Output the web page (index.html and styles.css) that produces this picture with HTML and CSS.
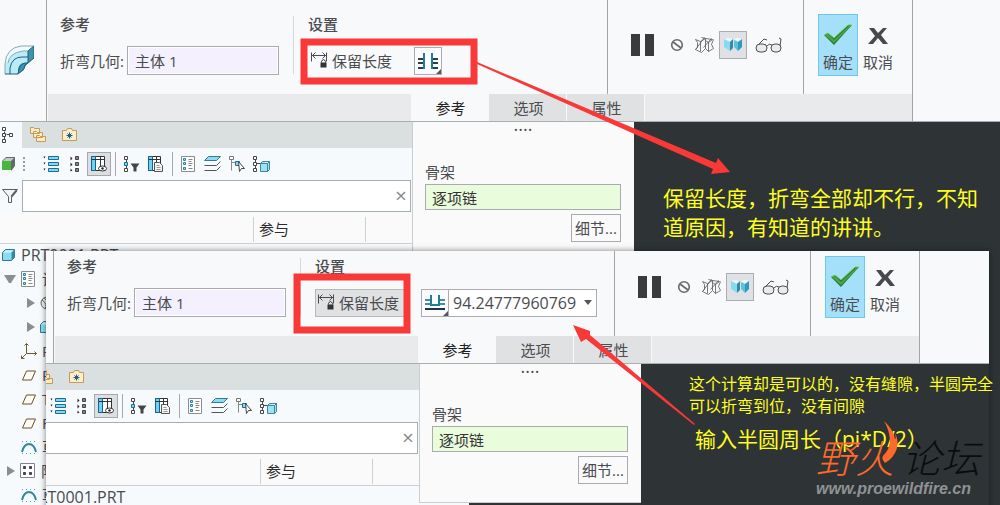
FILE: index.html
```
<!DOCTYPE html>
<html lang="zh-CN">
  <head>
    <meta charset="utf-8" />
    <title>折弯 - 保留长度</title>
    <link rel="stylesheet" href="styles.css">
  </head>
  <body>
    <svg class="sprite" aria-hidden="true">
      <symbol id="i-bend" viewBox="0 0 30 30">
        <path d="M1 29V19Q2 3 17 1H30L24 6V18H19L14 23V29Z" fill="#b9ecf7" />
        <path d="M1 19Q2 3 17 1H30L24 6H19Q8 7 4 16Z" fill="#eefbfe" />
        <path d="M24 6L30 1V13L24 18ZM14 29V24Q15 19 19 18H24L20 23V25L14 29Z" fill="#3f93b0" />
        <path d="M1 29V19Q2 3 17 1H30L24 6H19Q5 8 4 18" fill="none" stroke="#8aa9b4" />
        <path d="M1 29H14L20 24Q20 19 24 18L30 13V1L24 6V18H21Q15 19 14 29M6 29V23Q8 12 18 12H24" fill="none" stroke="#1f5f7a" />
      </symbol>
      <symbol id="i-keep" viewBox="-0.5 -0.5 17 17">
        <path d="M0 0V9M15 0V9M0 3H15M4 0L1 3L4 6M11 0L14 3L11 6" fill="none" stroke="#4a4c4e" />
        <path d="M10 10V9Q12 5 14 9V10" fill="none" stroke="#333" />
        <path d="M9 10H15V15H9Z" fill="#333" />
      </symbol>
      <symbol id="i-slit" viewBox="0 0 22 18">
        <path d="M1 7H6M1 11H6M1 16H6M16 7H21M16 11H21M16 16H21" stroke="#333c44" stroke-width="2" />
        <path d="M7 1V17M15 1V17" stroke="#1c7d9c" stroke-width="2" />
      </symbol>
      <symbol id="i-fold" viewBox="0 0 22 18">
        <path d="M1 6H6M1 10H6M16 6H21M16 10H21" stroke="#4b8ba0" stroke-width="2" />
        <path d="M1 15H21" stroke="#20334a" stroke-width="2" />
        <path d="M7 1V11H15V1" fill="none" stroke="#1c7d9c" stroke-width="2" />
      </symbol>
      <symbol id="i-pause" viewBox="0 0 23 22">
        <path d="M0 0H9V22H0ZM14 0H23V22H14Z" fill="#3b3b3d" />
      </symbol>
      <symbol id="i-none" viewBox="0 0 14 14">
        <circle cx="7" cy="7" r="5.3" fill="none" stroke="#66696c" stroke-width="1.6" />
        <path d="M3 4L11 10" stroke="#66696c" stroke-width="1.6" />
      </symbol>
      <symbol id="i-wire" viewBox="-0.5 -0.5 20 18">
        <path d="M0 3L5 5L10 2M0 3L2 6V11L0 13L6 16L10 12V2L6 1M5 5V15M10 2L17 3L13 6L10 4M13 6V15L18 12L16 8L18 3M10 12L13 15M0 13L9 1M8 11L16 2" fill="none" stroke="#55585b" stroke-width="0.8" />
      </symbol>
      <symbol id="i-solid" viewBox="0 0 18 14">
        <path d="M0 1L5 0L9 1L6 4Z" fill="#e9fbff" />
        <path d="M0 1L6 4V13L0 9Z" fill="#86dbf0" />
        <path d="M6 4L9 1V10L6 13Z" fill="#3489a5" />
        <path d="M10 1L14 0L18 1L15 4Z" fill="#effcff" />
        <path d="M10 2L14 4V13L10 9Z" fill="#5cc3df" />
        <path d="M14 4L18 1V9L14 13Z" fill="#2e9ac0" />
      </symbol>
      <symbol id="i-glasses" viewBox="0 0 28 16">
        <path d="M2 9L9 2L12 3M12 9Q14 6 17 8M25 9L26 2L24 1" fill="none" stroke="#4a4d50" />
        <rect x="1" y="7" width="11" height="8" rx="4" fill="#e9ecee" stroke="#4a4d50" />
        <rect x="16" y="7" width="10" height="8" rx="4" fill="#e9ecee" stroke="#4a4d50" />
      </symbol>
      <symbol id="i-ok" viewBox="0 0 28 22">
        <path d="M0 11L4 9L10 14L24 1H28L10 21Z" fill="#2c7b35" />
        <path d="M1 11L4 10L10 16L25 2H27L10 19Z" fill="#46a64a" />
        <path d="M0 11L4 9L10 14L24 1H28" fill="none" stroke="#7ccb5c" />
      </symbol>
      <symbol id="i-cancel" viewBox="0 0 20 16">
        <path d="M1 0H6L10 5L15 0H19L13 7L20 16H15L10 10L5 16H0L7 8Z" fill="#47494c" />
      </symbol>
      <symbol id="i-tree" viewBox="-0.5 -0.5 12 16">
        <path d="M2 4V12M4 7H8" stroke="#444" />
        <path d="M0 0H3V3H0ZM0 6H3V9H0ZM0 12H3V15H0ZM7 6H10V9H7Z" fill="#fff" stroke="#444" />
      </symbol>
      <symbol id="i-folders" viewBox="-0.5 -0.5 16 16">
        <path d="M0 0H3L4 1H9V6H0ZM3 4H6L7 5H12V10H3ZM6 8H9L10 9H15V14H6Z" fill="#fdebc4" stroke="#c39a57" />
      </symbol>
      <symbol id="i-star" viewBox="-0.5 -0.5 16 14">
        <path d="M0 2H4L5 0H9L10 2H14V12H0Z" fill="#fdeecb" stroke="#c39a57" />
        <path d="M7 4V10M4 7H10M5 5L9 9M9 5L5 9" stroke="#1d5f82" />
      </symbol>
      <symbol id="i-cube" viewBox="0 0 13 14">
        <path d="M0 4L4 0H13V9L9 14V4Z" fill="#66696c" />
        <path d="M1 4L4 1H12L9 4Z" fill="#c6c9c9" />
        <path d="M0 4H9V13H0Z" fill="#46b93a" />
      </symbol>
      <symbol id="i-part" viewBox="-0.5 -0.5 14 13">
        <path d="M0 3L3 0H12V8L9 11H0Z" fill="#8bdcf3" stroke="#2b7795" />
        <path d="M1 3L3 1H11L9 3Z" fill="#d5f5fc" />
        <path d="M9 3L12 0V8L9 11Z" fill="#3589a8" />
      </symbol>
      <symbol id="i-list" viewBox="-0.5 -0.5 16 16">
        <path d="M0 0H2L1 2ZM0 6H2L1 8ZM0 12H2L1 14Z" fill="#222" />
        <path d="M5 0H15V3H5ZM5 6H15V9H5ZM5 12H15V15H5Z" fill="#7ed9f5" stroke="#1d6b94" />
      </symbol>
      <symbol id="i-compact" viewBox="-0.5 -0.5 16 16">
        <path d="M3 0L5 2L3 4ZM3 6L5 8L3 10ZM3 12L5 14L3 15Z" fill="#222" />
        <path d="M8 0H11V3H8ZM8 6H11V9H8ZM8 12H11V15H8Z" fill="#888" stroke="#444" />
      </symbol>
      <symbol id="i-columns" viewBox="-0.5 -0.5 16 16">
        <path d="M0 0H13V14H0Z" fill="#fff" stroke="#333" />
        <path d="M0 0H4V14H0Z" fill="#6dd2f4" stroke="#1a6189" />
        <path d="M0 3H13M9 0V14" stroke="#333" />
        <ellipse cx="11" cy="12" rx="4" ry="2.5" fill="#fff" stroke="#333" />
        <circle cx="11" cy="12" r="1.2" fill="#222" />
      </symbol>
      <symbol id="i-treefilter" viewBox="-0.5 -0.5 16 16">
        <path d="M2 3V13" stroke="#444" />
        <path d="M0 0H3V3H0ZM0 12H3V15H0Z" fill="#fff" stroke="#444" />
        <path d="M0 6H3V9H0Z" fill="#7ed9f5" stroke="#1d6b94" />
        <path d="M6 7H15L12 11V15H9V11Z" fill="#444" />
      </symbol>
      <symbol id="i-paste" viewBox="-0.5 -0.5 16 16">
        <path d="M0 0H12V14H0Z" fill="#fff" stroke="#333" />
        <path d="M0 0H4V14H0Z" fill="#6dd2f4" stroke="#1a6189" />
        <path d="M0 3H12M8 0V7" stroke="#333" />
        <path d="M6 6H11L14 9V15H6Z" fill="#f6f6f6" stroke="#555" />
        <path d="M8 9H11M8 11H12M8 13H12" stroke="#999" />
      </symbol>
      <symbol id="i-detail" viewBox="-0.5 -0.5 16 16">
        <path d="M0 0H13V15H0Z" fill="#fff" stroke="#8a8d90" />
        <path d="M2 2H4V4H2ZM2 6H4V8H2ZM2 11H4V13H2Z" fill="#9fdff2" stroke="#2c83a6" />
        <path d="M7 3H11M7 5H10M7 7H11M7 9H10M7 12H11" stroke="#888" />
      </symbol>
      <symbol id="i-layers" viewBox="-0.5 -0.5 18 16">
        <path d="M4 0H16L12 4H0Z" fill="#8adcf2" stroke="#39778f" />
        <path d="M0 9H12L16 5M0 14H12L16 10" fill="none" stroke="#555" />
      </symbol>
      <symbol id="i-pick" viewBox="-0.5 -0.5 16 16">
        <path d="M2 3V14M2 6H6" stroke="#888" />
        <path d="M0 0H4V3H0Z" fill="#fff" stroke="#777" />
        <path d="M6 5H10V9H6Z" fill="#8adcf2" stroke="#1d6b94" />
        <path d="M9 5L15 12H12L10 15Z" fill="#fff" stroke="#444" />
      </symbol>
      <symbol id="i-treecube" viewBox="-0.5 -0.5 17 16">
        <path d="M2 3V13M3 7H7" stroke="#444" />
        <path d="M0 0H3V3H0ZM0 6H3V9H0ZM0 12H3V15H0Z" fill="#fff" stroke="#444" />
        <path d="M7 7L9 5H16V13L14 15H7ZM14 7V15M7 7H14L16 5" fill="#9fe2f5" stroke="#3a87a3" />
      </symbol>
      <symbol id="i-funnel" viewBox="-0.5 -0.5 17 15">
        <path d="M0 0H15L9 7V13H6V7Z" fill="#f2f3f4" stroke="#5b5e61" />
        <path d="M9 7L14 1" stroke="#5b5e61" stroke-width="2" />
      </symbol>
      <symbol id="i-csys" viewBox="-0.5 -0.5 16 16">
        <path d="M5 0V10H15M5 10L0 15M3 2L5 0L7 2M13 8L15 10L13 12M0 12V15H3" fill="none" stroke="#6b5a36" />
      </symbol>
      <symbol id="i-plane" viewBox="0 0 15 11">
        <path d="M5 1H14L10 10H1Z" fill="#fffdf6" stroke="#6b4f2a" />
      </symbol>
      <symbol id="i-sketch" viewBox="0 0 16 13">
        <path d="M1 11Q3 3 8 3T15 11" fill="none" stroke="#2f83a5" stroke-width="2" />
        <path d="M1 0.5H16M1 12.5H16" stroke="#3fa5cf" stroke-dasharray="1 3" />
      </symbol>
      <symbol id="i-pattern" viewBox="-0.5 -0.5 16 16">
        <path d="M0 0H14V14H0Z" fill="#fff" stroke="#85809a" />
        <path d="M3 3H5V5H3ZM9 3H11V5H9ZM3 9H5V11H3ZM9 9H11V11H9Z" fill="#453f58" stroke="#453f58" />
      </symbol>
      <symbol id="i-ball" viewBox="0 0 14 14">
        <circle cx="7" cy="7" r="6" fill="#eee" stroke="#666" />
        <path d="M2 4Q8 8 5 13M4 2Q10 6 9 13" fill="none" stroke="#666" />
      </symbol>
    </svg>

    <main class="desktop">
      <!-- window with the split-style bend -->
      <section class="window">
        <header class="ribbon">
          <div class="logo"><svg width="30" height="30"><use href="#i-bend" /></svg></div>
          <div class="panel">
            <div class="groups">
              <div class="group refs">
                <h2>参考</h2>
                <div class="line">
                  <label for="geom-a">折弯几何:</label>
                  <input class="geom" id="geom-a" type="text" value="主体 1" />
                </div>
              </div>
              <div class="group settings">
                <h2>设置</h2>
                <div class="line">
                  <button class="keep" type="button"><svg width="17" height="17"><use href="#i-keep" /></svg>保留长度</button>
                  <button class="mode" type="button" aria-label="折弯类型"><svg width="22" height="18"><use href="#i-slit" /></svg></button>
                </div>
              </div>
              <div class="group preview">
                <button class="pause" type="button" aria-label="暂停"><svg width="23" height="22"><use href="#i-pause" /></svg></button>
                <button class="tool" type="button" aria-label="无预览"><svg width="14" height="14"><use href="#i-none" /></svg></button>
                <button class="tool" type="button" aria-label="分离"><svg width="20" height="18"><use href="#i-wire" /></svg></button>
                <button class="tool pressed" type="button" aria-label="连接"><svg width="18" height="14"><use href="#i-solid" /></svg></button>
                <button class="tool glasses" type="button" aria-label="特征预览"><svg width="28" height="16"><use href="#i-glasses" /></svg></button>
              </div>
              <div class="group finish">
                <button class="ok" type="button"><svg width="28" height="22"><use href="#i-ok" /></svg>确定</button>
                <button class="cancel" type="button"><svg width="20" height="16"><use href="#i-cancel" /></svg>取消</button>
              </div>
            </div>
            <nav class="tabs">
              <button class="active" type="button">参考</button>
              <button type="button">选项</button>
              <button type="button">属性</button>
            </nav>
          </div>
        </header>

        <div class="workarea">
          <aside class="navigator">
            <div class="nav-tabs">
              <button class="active" type="button" aria-label="模型树"><svg width="12" height="16"><use href="#i-tree" /></svg></button>
              <button type="button" aria-label="文件夹"><svg width="16" height="16"><use href="#i-folders" /></svg></button>
              <button type="button" aria-label="收藏夹"><svg width="16" height="14"><use href="#i-star" /></svg></button>
            </div>
            <div class="toolbar">
              <span class="cube"><svg width="13" height="14"><use href="#i-cube" /></svg></span>
              <button type="button" aria-label="展开"><svg width="16" height="16"><use href="#i-list" /></svg></button>
              <button type="button" aria-label="折叠"><svg width="16" height="16"><use href="#i-compact" /></svg></button>
              <button class="pressed" type="button" aria-label="显示列"><svg width="16" height="16"><use href="#i-columns" /></svg></button>
              <i></i>
              <button type="button" aria-label="树过滤器"><svg width="16" height="16"><use href="#i-treefilter" /></svg></button>
              <button type="button" aria-label="树列"><svg width="16" height="16"><use href="#i-paste" /></svg></button>
              <i></i>
              <button type="button" aria-label="详细信息"><svg width="16" height="16"><use href="#i-detail" /></svg></button>
              <button type="button" aria-label="层树"><svg width="18" height="16"><use href="#i-layers" /></svg></button>
              <button type="button" aria-label="选择"><svg width="16" height="16"><use href="#i-pick" /></svg></button>
              <button type="button" aria-label="主体"><svg width="17" height="16"><use href="#i-treecube" /></svg></button>
            </div>
            <div class="search">
              <svg width="17" height="15"><use href="#i-funnel" /></svg>
              <input type="text" aria-label="过滤" />
              <button type="button" aria-label="清除">×</button>
            </div>
            <table class="tree">
              <thead>
                <tr><th class="name"></th><th class="part"><span>参与</span></th><th><span></span></th></tr>
              </thead>
              <tbody>
                <tr><td colspan="3"><div class="node root"><svg width="14" height="13"><use href="#i-part" /></svg>PRT0001.PRT</div></td></tr>
                <tr><td colspan="3"><div class="node"><b class="open"></b><svg width="16" height="16"><use href="#i-detail" /></svg>设计项</div></td></tr>
                <tr><td colspan="3"><div class="node child"><b></b><svg width="14" height="14"><use href="#i-ball" /></svg>材料</div></td></tr>
                <tr><td colspan="3"><div class="node child"><b></b><svg width="14" height="13"><use href="#i-part" /></svg>主体 1</div></td></tr>
                <tr><td colspan="3"><div class="node leaf"><svg width="16" height="16"><use href="#i-csys" /></svg>PRT_CSYS_DEF</div></td></tr>
                <tr><td colspan="3"><div class="node leaf"><svg width="16" height="11"><use href="#i-plane" /></svg>RIGHT</div></td></tr>
                <tr><td colspan="3"><div class="node leaf"><svg width="16" height="11"><use href="#i-plane" /></svg>TOP</div></td></tr>
                <tr><td colspan="3"><div class="node leaf"><svg width="16" height="11"><use href="#i-plane" /></svg>FRONT</div></td></tr>
                <tr><td colspan="3"><div class="node leaf"><svg width="16" height="13"><use href="#i-sketch" /></svg>草绘 1</div></td></tr>
                <tr><td colspan="3"><div class="node"><b></b><svg width="16" height="16"><use href="#i-pattern" /></svg>阵列 1</div></td></tr>
                <tr><td colspan="3"><div class="node leaf"><svg width="16" height="13"><use href="#i-sketch" /></svg>草绘 2</div></td></tr>
              </tbody>
            </table>
          </aside>
          <div class="flyout">
            <span class="grip">····</span>
            <label for="chain-a">骨架</label>
            <input id="chain-a" type="text" value="逐项链" />
            <button type="button">细节...</button>
          </div>
        </div>
      </section>

      <!-- window with the fixed length, lies over the first one -->
      <section class="window front">
        <header class="ribbon">
          <div class="panel">
            <div class="groups">
              <div class="group refs">
                <h2>参考</h2>
                <div class="line">
                  <label for="geom-b">折弯几何:</label>
                  <input class="geom" id="geom-b" type="text" value="主体 1" />
                </div>
              </div>
              <div class="group settings">
                <h2>设置</h2>
                <div class="line">
                  <button class="keep pressed" type="button"><svg width="17" height="17"><use href="#i-keep" /></svg>保留长度</button>
                  <button class="mode" type="button" aria-label="折弯类型"><svg width="22" height="18"><use href="#i-fold" /></svg></button>
                  <div class="combo">
                    <input type="text" aria-label="长度" value="94.24777960769" />
                    <button type="button" aria-label="最近的值"></button>
                  </div>
                </div>
              </div>
              <div class="group preview">
                <button class="pause" type="button" aria-label="暂停"><svg width="23" height="22"><use href="#i-pause" /></svg></button>
                <button class="tool" type="button" aria-label="无预览"><svg width="14" height="14"><use href="#i-none" /></svg></button>
                <button class="tool" type="button" aria-label="分离"><svg width="20" height="18"><use href="#i-wire" /></svg></button>
                <button class="tool pressed" type="button" aria-label="连接"><svg width="18" height="14"><use href="#i-solid" /></svg></button>
                <button class="tool glasses" type="button" aria-label="特征预览"><svg width="28" height="16"><use href="#i-glasses" /></svg></button>
              </div>
              <div class="group finish">
                <button class="ok" type="button"><svg width="28" height="22"><use href="#i-ok" /></svg>确定</button>
                <button class="cancel" type="button"><svg width="20" height="16"><use href="#i-cancel" /></svg>取消</button>
              </div>
            </div>
            <nav class="tabs">
              <button class="active" type="button">参考</button>
              <button type="button">选项</button>
              <button type="button">属性</button>
            </nav>
          </div>
        </header>

        <div class="workarea">
          <aside class="navigator">
            <div class="nav-tabs">
              <button class="active" type="button" aria-label="模型树"><svg width="12" height="16"><use href="#i-tree" /></svg></button>
              <button type="button" aria-label="文件夹"><svg width="16" height="16"><use href="#i-folders" /></svg></button>
              <button type="button" aria-label="收藏夹"><svg width="16" height="14"><use href="#i-star" /></svg></button>
            </div>
            <div class="toolbar">
              <span class="cube"><svg width="13" height="14"><use href="#i-cube" /></svg></span>
              <button type="button" aria-label="展开"><svg width="16" height="16"><use href="#i-list" /></svg></button>
              <button type="button" aria-label="折叠"><svg width="16" height="16"><use href="#i-compact" /></svg></button>
              <button class="pressed" type="button" aria-label="显示列"><svg width="16" height="16"><use href="#i-columns" /></svg></button>
              <i></i>
              <button type="button" aria-label="树过滤器"><svg width="16" height="16"><use href="#i-treefilter" /></svg></button>
              <button type="button" aria-label="树列"><svg width="16" height="16"><use href="#i-paste" /></svg></button>
              <i></i>
              <button type="button" aria-label="详细信息"><svg width="16" height="16"><use href="#i-detail" /></svg></button>
              <button type="button" aria-label="层树"><svg width="18" height="16"><use href="#i-layers" /></svg></button>
              <button type="button" aria-label="选择"><svg width="16" height="16"><use href="#i-pick" /></svg></button>
              <button type="button" aria-label="主体"><svg width="17" height="16"><use href="#i-treecube" /></svg></button>
            </div>
            <div class="search">
              <svg width="17" height="15"><use href="#i-funnel" /></svg>
              <input type="text" aria-label="过滤" />
              <button type="button" aria-label="清除">×</button>
            </div>
            <table class="tree">
              <thead>
                <tr><th class="name"></th><th class="part"><span>参与</span></th><th><span></span></th></tr>
              </thead>
              <tbody>
                <tr><td colspan="3"><div class="node root"><svg width="14" height="13"><use href="#i-part" /></svg>PRT0001.PRT</div></td></tr>
              </tbody>
            </table>
          </aside>
          <div class="flyout">
            <span class="grip">····</span>
            <label for="chain-b">骨架</label>
            <input id="chain-b" type="text" value="逐项链" />
            <button type="button">细节...</button>
          </div>
        </div>
      </section>

      <!-- red boxes and arrows -->
      <svg class="marks" width="1000" height="505" viewBox="0 0 1000 505" aria-hidden="true">
        <rect x="304" y="42" width="170" height="39" />
        <rect x="297" y="277" width="110" height="53" />
        <path d="M477 62L716 163L718 158L730 172L711 174L713 169L477 64Z" />
        <path d="M694 425L586 339L581 342L573 325L590 331L590 335L695 424Z" />
      </svg>

      <p class="note note-top">保留长度，折弯全部却不行，不知道原因，有知道的讲讲。</p>
      <p class="note note-calc">这个计算却是可以的，没有缝隙，半圆完全可以折弯到位，没有间隙</p>
      <p class="note note-input">输入半圆周长（pi*D/2）</p>

      <div class="watermark">
        <div class="brand"><em>野火</em><span>论坛</span></div>
        <a href="#">www.proewildfire.cn</a>
        <svg class="flame" width="16" height="42" viewBox="0 0 16 42"><path d="M2 0Q11 8 13 18Q15 17 12 11Q17 18 15 27Q12 37 3 42Q-1 38 1 35Q8 28 8 19Q7 8 2 0Z" fill="#ff6a2b" /></svg>
      </div>
    </main>
  </body>
</html>
```
FILE: styles.css
```
* {
  box-sizing: border-box;
}
body {
  margin: 0;
  background-color: #2e3436;
  color: #4a4c4f;
  font: 15px/20px "Open Sans", "Noto Sans CJK SC", sans-serif;
}
button,
input {
  margin: 0;
  padding: 0;
  border: 0;
  border-radius: 0;
  background: none;
  color: inherit;
  font: inherit;
}
input {
  min-width: 0;
}
svg {
  display: block;
  flex: none;
}
.sprite {
  position: absolute;
  width: 0;
  height: 0;
}
.desktop {
  position: relative;
  height: 100vh;
  overflow: hidden;
}

/* windows */
.window {
  display: flex;
  flex-direction: column;
  min-height: 100%;
}
.window.front {
  position: absolute;
  top: 251px;
  left: 46px;
  right: 11px;
  min-height: 280px;
  overflow: hidden;
  background-color: #2e3436;
  box-shadow: 0 0 6px rgba(0, 0, 0, 0.5);
}

/* ribbon */
.ribbon {
  display: flex;
  background-color: #f8f9fb;
  border-bottom: 1px solid #a5b1b1;
}
.front .ribbon {
  padding-left: 7px;
}
.logo {
  width: 46px;
  padding: 45px 0 0 4px;
}
.panel {
  width: 867px;
  border: 1px solid #a2a4a6;
  border-width: 0 1px;
}
.groups {
  display: flex;
  height: 94px;
}
.front .groups {
  height: 85px;
}
.group {
  padding-top: 14px;
}
.front .group {
  padding-top: 5px;
}
.group h2 {
  margin: 0 0 12px;
  font-size: 15px;
  line-height: 20px;
  font-weight: 500;
}
.line {
  display: flex;
  align-items: center;
  height: 29px;
}
.refs {
  width: 246px;
  padding-left: 13px;
}
.refs label {
  width: 67px;
}
.geom {
  width: 152px;
  height: 29px;
  padding: 0 7px;
  border: 1px solid #a9abae;
  background-color: #f4f0fd;
  box-shadow: inset 0 0 0 1px #fff;
}
.settings {
  width: 314px;
  padding-left: 15px;
  background: linear-gradient(#d5d7d9, #d5d7d9) 0 16px / 1px 58px no-repeat;
}
.front .settings {
  background-position: 0 7px;
}
.keep {
  display: flex;
  align-items: center;
  gap: 4px;
  width: 92px;
  height: 28px;
  padding-left: 3px;
  white-space: nowrap;
}
.keep.pressed {
  padding-left: 2px;
  border: 1px solid #b6b8ba;
  background-color: #e0e1e3;
}
.mode {
  position: relative;
  display: flex;
  align-items: center;
  justify-content: center;
  width: 28px;
  height: 28px;
  margin-left: 14px;
  border: 1px solid #abadb2;
  background-color: #fafbfd;
}
.mode::after {
  content: "";
  position: absolute;
  right: 0;
  bottom: 0;
  border-left: 5px solid transparent;
  border-bottom: 5px solid #55575a;
}
.combo {
  display: flex;
  align-items: center;
  width: 148px;
  height: 28px;
  border: 1px solid #abadb2;
  border-left: 0;
  background-color: #fff;
}
.combo input {
  flex: 1;
  padding-left: 4px;
  font-size: 16px;
}
.combo button {
  width: 14px;
  height: 26px;
}
.combo button::after {
  content: "";
  display: block;
  width: 0;
  margin-left: 2px;
  border: 4px solid transparent;
  border-top: 5px solid #55575a;
  border-bottom: 0;
}
.preview {
  display: flex;
  align-items: flex-start;
  width: 196px;
  padding-left: 23px;
  border-left: 1px solid #a2a4a6;
}
.preview button {
  display: flex;
  align-items: center;
  justify-content: center;
  width: 28px;
  height: 28px;
  margin-top: 17px;
}
.preview .pause {
  width: 23px;
  margin-right: 9px;
}
.preview .glasses {
  margin-left: 8px;
}
.preview .pressed {
  border: 1px solid #aaacaf;
  background-color: #e0e1e4;
}
.finish {
  display: flex;
  align-items: flex-start;
  flex: 1;
  padding-left: 14px;
  border-left: 1px solid #a2a4a6;
}
.finish button {
  display: flex;
  flex-direction: column;
  align-items: center;
  justify-content: space-between;
  width: 40px;
  height: 62px;
  padding: 9px 0 3px;
  white-space: nowrap;
}
.finish .cancel {
  padding: 14px 0 4px;
}
.finish .ok {
  border: 1px solid #6fc8ec;
  background-color: #a5e0fb;
}
.tabs {
  display: flex;
  height: 27px;
  margin-left: 1px;
  padding-left: 363px;
  background-color: #e8eaeb;
}
.tabs button {
  width: 78px;
  padding-left: 2px;
  border-right: 1px solid #f8f9fb;
  background-color: #dfe1e2;
}
.tabs .active {
  background-color: #f8f9fb;
  color: #222;
}

/* model tree side */
.workarea {
  position: relative;
  display: flex;
  flex: 1;
}
.navigator {
  width: 462px;
  flex: none;
  background-color: #f7fafc;
}
.front .navigator {
  margin-left: -39px;
}
.nav-tabs {
  display: flex;
  height: 26px;
  background-color: #dadfdf;
}
.nav-tabs button {
  display: flex;
  align-items: center;
  justify-content: center;
  width: 32px;
}
.nav-tabs .active {
  width: 22px;
  padding-right: 6px;
  background-color: #f7fafc;
}
.toolbar {
  display: flex;
  align-items: center;
  height: 32px;
}
.toolbar .cube {
  width: 25px;
  margin-right: 14px;
  padding-left: 2px;
  border-right: 2px dotted #999;
}
.toolbar button {
  display: flex;
  align-items: center;
  justify-content: center;
  width: 24px;
  height: 24px;
}
.toolbar .pressed {
  border: 1px solid #a6a8ab;
  background-color: #dcdee1;
}
.toolbar i {
  width: 1px;
  height: 24px;
  margin: 0 4px;
  background-color: #a6a8ab;
}
.search {
  display: flex;
  align-items: center;
  width: 411px;
  height: 32px;
  padding-left: 2px;
}
.search input {
  flex: 1;
  height: 32px;
  margin: 0 -20px 0 3px;
  border: 1px solid #a3afb0;
  background-color: #fff;
}
.search button {
  width: 20px;
  color: #888;
  font-size: 20px;
}
.tree {
  width: 100%;
  table-layout: fixed;
  border-collapse: collapse;
}
.tree th {
  height: 31px;
  padding: 5px 0 0;
  border-bottom: 1px solid #ccd0d3;
  background-color: #fafafb;
  color: #2c2c2e;
  font-weight: 400;
  text-align: left;
}
.tree .name {
  width: 253px;
}
.tree .part {
  width: 112px;
}
.tree th span {
  display: block;
  height: 25px;
  padding-left: 5px;
  border-left: 1px solid #ccd0d3;
  line-height: 25px;
}
.tree td {
  height: 24px;
  padding: 0;
}
.node {
  display: flex;
  align-items: center;
  gap: 5px;
  padding-left: 4px;
  white-space: nowrap;
}
.node.root {
  padding-left: 2px;
  font-size: 16px;
}
.node.leaf {
  padding-left: 21px;
}
.node.child {
  padding-left: 24px;
}
.node b {
  width: 11px;
  margin-left: 3px;
  margin-right: -3px;
  border: 5px solid transparent;
  border-left: 8px solid #8b8d8f;
  border-right: 0;
}
.node b.open {
  width: 12px;
  margin: 0;
  border: 5px solid transparent;
  border-top: 8px solid #8b8d8f;
  border-bottom: 0;
}

/* collector drawer that drops from the tab */
.flyout {
  position: absolute;
  top: 0;
  left: 412px;
  display: flex;
  flex-direction: column;
  width: 222px;
  height: 139px;
  padding: 0 13px 0 12px;
  border: 1px solid #c9cfd1;
  border-width: 0 0 1px 1px;
  background-color: #fafafb;
}
.front .flyout {
  left: 373px;
}
.grip {
  height: 40px;
  font-size: 18px;
  line-height: 14px;
  text-align: center;
}
.flyout input {
  height: 26px;
  margin: 2px 0 4px;
  padding: 0 6px;
  border: 1px solid #a9abae;
  background-color: #e9fcdc;
  color: #333;
}
.flyout button {
  align-self: flex-end;
  width: 50px;
  height: 28px;
  border: 1px solid #a9abae;
}

/* marks and notes drawn over the windows */
.marks {
  position: absolute;
  top: 0;
  left: 0;
  fill: #f93838;
  pointer-events: none;
}
.marks rect {
  fill: none;
  stroke: #f93838;
  stroke-width: 7;
}
.note {
  position: absolute;
  margin: 0;
  color: #ffff1e;
  font-size: 21px;
  line-height: 29px;
}
.note-top {
  top: 184px;
  left: 663px;
  width: 320px;
}
.note-calc {
  top: 373px;
  left: 689px;
  width: 306px;
  font-size: 16px;
  line-height: 22px;
}
.note-input {
  top: 425px;
  left: 695px;
  white-space: nowrap;
}
.watermark {
  position: absolute;
  top: 437px;
  left: 816px;
}
.brand {
  display: flex;
  gap: 8px;
  height: 42px;
  font-size: 39px;
  line-height: 42px;
  font-weight: 300;
  font-style: italic;
  color: #0c0c0c;
}
.brand em {
  color: #ff6a2b;
}
.watermark a {
  display: block;
  color: #8f9294;
  font: italic bold 16px/20px "Liberation Sans", sans-serif;
  text-decoration: none;
}
.flame {
  position: absolute;
  top: -16px;
  left: 66px;
}
```
